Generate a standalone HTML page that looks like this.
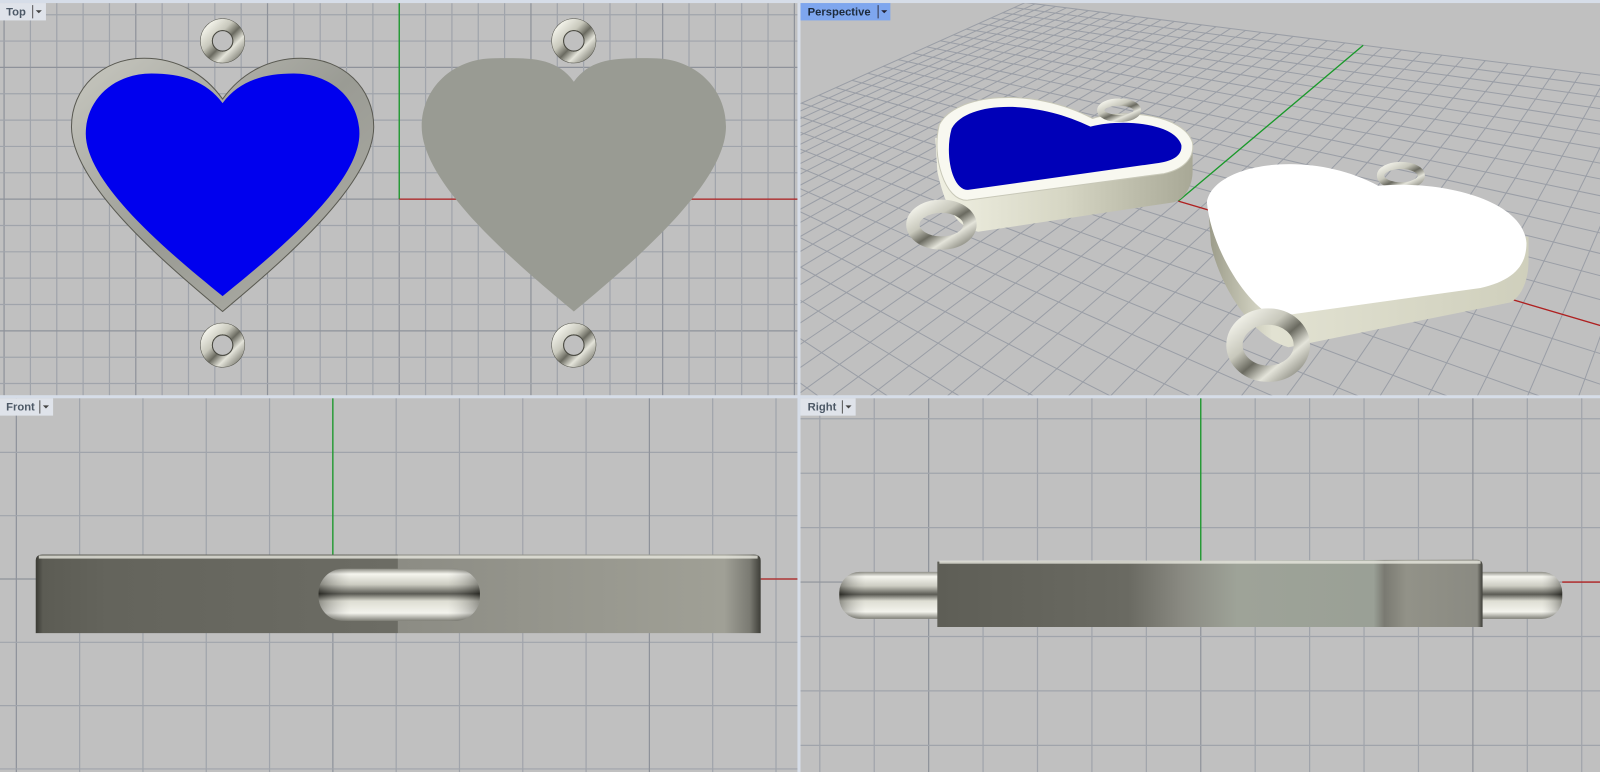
<!DOCTYPE html>
<html><head><meta charset="utf-8"><style>
html,body{margin:0;padding:0;background:#fff;overflow:hidden;width:1600px;height:772px}
svg{display:block;position:absolute;left:0;top:0}
text{font-family:"Liberation Sans",sans-serif;font-weight:bold;font-size:11px}
</style></head><body>
<svg id="s" width="1600" height="772" viewBox="0 0 1567 756" preserveAspectRatio="none" xmlns="http://www.w3.org/2000/svg">
<defs>
<clipPath id="c1"><rect x="0" y="3" width="781" height="384"/></clipPath>
<clipPath id="c2"><rect x="784" y="3" width="783" height="384"/></clipPath>
<clipPath id="c3"><rect x="0" y="390" width="781" height="366"/></clipPath>
<clipPath id="c4"><rect x="784" y="390" width="783" height="366"/></clipPath>
<linearGradient id="ring" x1="0" y1="0" x2="1" y2="1">
<stop offset="0" stop-color="#f6f6ee"/><stop offset=".35" stop-color="#c8c8bc"/><stop offset=".55" stop-color="#6a6a60"/><stop offset=".75" stop-color="#e4e4da"/><stop offset="1" stop-color="#8a8a80"/></linearGradient>
<linearGradient id="cap" x1="0" y1="0" x2="0" y2="1">
<stop offset="0" stop-color="#7a7a70"/><stop offset=".1" stop-color="#f4f4ec"/><stop offset=".3" stop-color="#c4c4b8"/><stop offset=".48" stop-color="#3e3e36"/><stop offset=".62" stop-color="#d8d8cc"/><stop offset=".85" stop-color="#f2f2ea"/><stop offset="1" stop-color="#6a6a60"/></linearGradient>
<linearGradient id="capH" x1="0" y1="0" x2="1" y2="0">
<stop offset="0" stop-color="#000" stop-opacity=".35"/><stop offset=".2" stop-color="#fff" stop-opacity=".15"/><stop offset=".8" stop-color="#fff" stop-opacity=".15"/><stop offset="1" stop-color="#000" stop-opacity=".35"/></linearGradient>
<linearGradient id="front" x1="0" y1="0" x2="1" y2="0">
<stop offset="0" stop-color="#3a3a34"/><stop offset=".01" stop-color="#5c5c54"/><stop offset=".1" stop-color="#64645c"/><stop offset=".499" stop-color="#6c6c64"/><stop offset=".5" stop-color="#8c8c84"/><stop offset=".95" stop-color="#a0a096"/><stop offset=".985" stop-color="#7a7a72"/><stop offset="1" stop-color="#3e3e38"/></linearGradient>
<linearGradient id="right" x1="0" y1="0" x2="1" y2="0">
<stop offset="0" stop-color="#5e5e56"/><stop offset=".35" stop-color="#6a6a62"/><stop offset=".45" stop-color="#8a8a82"/><stop offset=".55" stop-color="#9ea398"/><stop offset=".8" stop-color="#9aa096"/><stop offset=".82" stop-color="#7a7a72"/><stop offset=".86" stop-color="#929288"/><stop offset=".99" stop-color="#8a8a82"/><stop offset="1" stop-color="#3e3e38"/></linearGradient>
<linearGradient id="sideA" x1="0" y1="0" x2="1" y2="0">
<stop offset="0" stop-color="#f0f0e2"/><stop offset=".5" stop-color="#d6d6c4"/><stop offset="1" stop-color="#a8a896"/></linearGradient>
<linearGradient id="sideB" x1="0" y1="0" x2="1" y2="0">
<stop offset="0" stop-color="#9a9a88"/><stop offset=".2" stop-color="#e2e2d2"/><stop offset="1" stop-color="#cfcfbc"/></linearGradient>
<linearGradient id="rimT" x1="0" y1="0" x2="1" y2="1">
<stop offset="0" stop-color="#c8c8c0"/><stop offset=".5" stop-color="#9a9b94"/><stop offset="1" stop-color="#b0b0a8"/></linearGradient>
</defs>
<rect x="0" y="0" width="1567" height="756" fill="#d6dde8"/>
<rect x="0" y="3" width="781" height="384" fill="#c0c0c0"/>
<rect x="784" y="3" width="783" height="384" fill="#c0c0c0"/>
<rect x="0" y="390" width="781" height="366" fill="#c0c0c0"/>
<rect x="784" y="390" width="783" height="366" fill="#c0c0c0"/>
<g id="g1" clip-path="url(#c1)" stroke="#a0a4ab" stroke-width="1.2"></g>
<g id="g2" clip-path="url(#c2)" stroke="#9a9ea6" stroke-width="1"></g>
<g id="g3" clip-path="url(#c3)" stroke="#a0a4ab" stroke-width="1.2"></g>
<g id="g4" clip-path="url(#c4)" stroke="#a0a4ab" stroke-width="1.2"></g>

<g clip-path="url(#c1)">
<line x1="391" y1="3" x2="391" y2="195" stroke="#1a9a2a" stroke-width="1.3"/>
<line x1="391" y1="195" x2="781" y2="195" stroke="#b02020" stroke-width="1.3"/>
<path id="h1o" fill="url(#rimT)" stroke="#5a5a52" stroke-width="1"/>
<path id="h1i" fill="#0000ee"/>
<path id="h2" fill="#999b93"/>
<g id="rings1"></g>
</g>

<g clip-path="url(#c2)">
<path d="M916,135 L918,168 C925,200 935,222 958,227 L1150,198 C1162,194 1168,180 1168,168 L1168,140 Z" fill="url(#sideA)"/>
<path d="M920,122 C935,92 1010,84 1070,116 C1100,106 1160,112 1168,140 C1170,156 1158,166 1140,170 L948,196 C925,198 912,152 920,122 Z" fill="#f8f8f0" stroke="#c8c8b8"/>
<path d="M932,126 C946,100 1010,96 1068,124 C1098,116 1150,120 1157,142 C1158,153 1148,158 1132,160 L948,186 C932,186 925,150 932,126 Z" fill="#0000b8"/>
<ellipse cx="1096" cy="108" rx="18" ry="8" fill="none" stroke="url(#ring)" stroke-width="7"/>
<ellipse cx="922" cy="220" rx="28" ry="18" fill="none" stroke="url(#ring)" stroke-width="13"/>
<path d="M1183,198 L1186,240 C1195,280 1225,330 1262,340 L1480,296 C1492,288 1497,272 1497,255 L1497,232 Z" fill="url(#sideB)"/>
<ellipse cx="1372" cy="172" rx="20" ry="10" fill="none" stroke="url(#ring)" stroke-width="7"/>
<path d="M1182,198 C1188,160 1282,145 1350,182 C1410,176 1492,195 1495,238 C1495,262 1480,275 1450,282 L1250,310 C1225,305 1186,245 1182,198 Z" fill="#ffffff"/>
<ellipse cx="1242" cy="338" rx="33" ry="28" fill="none" stroke="url(#ring)" stroke-width="16"/>
</g>

<g clip-path="url(#c3)">
<line x1="326" y1="390" x2="326" y2="545" stroke="#1a9a2a" stroke-width="1.3"/>
<line x1="745" y1="567" x2="781" y2="567" stroke="#b02020" stroke-width="1.3"/>
<path d="M35,620 L35,549 Q35,543 42,543 L738,543 Q745,543 745,549 L745,620 Z" fill="url(#front)"/>
<rect x="38" y="544" width="704" height="3" fill="#e8e8e0" opacity=".8"/>
<rect x="312" y="557" width="158" height="51" rx="24" fill="url(#cap)"/>
<rect x="312" y="557" width="158" height="51" rx="24" fill="url(#capH)"/>
</g>

<g clip-path="url(#c4)">
<line x1="1176" y1="390" x2="1176" y2="549" stroke="#1a9a2a" stroke-width="1.3"/>
<line x1="1530" y1="570" x2="1567" y2="570" stroke="#b02020" stroke-width="1.3"/>
<rect x="822" y="560" width="130" height="46" rx="20" fill="url(#cap)"/>
<rect x="822" y="560" width="130" height="46" rx="20" fill="url(#capH)"/>
<rect x="1430" y="560" width="100" height="46" rx="20" fill="url(#cap)"/>
<rect x="1430" y="560" width="100" height="46" rx="20" fill="url(#capH)"/>
<path d="M918,614 L918,550 L1446,548 Q1452,548 1452,554 L1452,614 Z" fill="url(#right)"/>
<rect x="920" y="549" width="530" height="3" fill="#e8e8e0" opacity=".8"/>
</g>

<rect x="0" y="3" width="45" height="17" fill="#dfe3ea"/>
<text x="6" y="15" fill="#4c5866">Top</text>
<line x1="32" y1="5" x2="32" y2="18" stroke="#555" stroke-width="1"/>
<path d="M35,10 h6 l-3,3 z" fill="#444"/>
<rect x="784" y="3" width="88" height="17" fill="#7ea6ee"/>
<text x="791" y="15" fill="#1c2a3c">Perspective</text>
<line x1="860" y1="5" x2="860" y2="18" stroke="#334" stroke-width="1"/>
<path d="M863,10 h6 l-3,3 z" fill="#223"/>
<rect x="0" y="390" width="52" height="17" fill="#dfe3ea"/>
<text x="6" y="402" fill="#4c5866">Front</text>
<line x1="39" y1="392" x2="39" y2="405" stroke="#555" stroke-width="1"/>
<path d="M42,397 h6 l-3,3 z" fill="#444"/>
<rect x="784" y="390" width="54" height="17" fill="#dfe3ea"/>
<text x="791" y="402" fill="#4c5866">Right</text>
<line x1="825" y1="392" x2="825" y2="405" stroke="#555" stroke-width="1"/>
<path d="M828,397 h6 l-3,3 z" fill="#444"/>
</svg>
<script>
var NS="http://www.w3.org/2000/svg";
function L(g,x1,y1,x2,y2,st,w){var l=document.createElementNS(NS,"line");l.setAttribute("x1",x1);l.setAttribute("y1",y1);l.setAttribute("x2",x2);l.setAttribute("y2",y2);if(st)l.setAttribute("stroke",st);if(w)l.setAttribute("stroke-width",w);document.getElementById(g).appendChild(l);}
function grid(g,cx,cy,s,x0,x1,y0,y1){for(var k=-40;k<=40;k++){var x=cx+k*s;if(x>=x0&&x<=x1)L(g,x,y0,x,y1,k%5==0?"#8e929a":null);var y=cy+k*s;if(y>=y0&&y<=y1)L(g,x0,y,x1,y,k%5==0?"#8e929a":null);}}
grid("g1",391,195,25.8,0,781,3,387);
grid("g3",326,567,62,0,781,390,756);
grid("g4",1176,570,53.3,784,1567,390,756);
var VPx=[112,-110],VPy=[1818,-363],O=[1154,197],Nu=25,Nv=15,Kx=49,Ky=40;
function P(u,v){var w=1+u/Kx+v/Ky;return[(O[0]+u/Kx*VPx[0]+v/Ky*VPy[0])/w,(O[1]+u/Kx*VPx[1]+v/Ky*VPy[1])/w];}
function ok(w){return w>0.03;}
for(var j=-Nv;j<=Nv;j++){var um=Math.max(-Nu,Kx*(0.03-1-j/Ky));if(um<Nu){var a=P(um,j),b=P(Nu,j);L("g2",a[0],a[1],b[0],b[1]);}}
for(var i=-Nu;i<=Nu;i++){var vm=Math.max(-Nv,Ky*(0.03-1-i/Kx));if(vm<Nv){var a=P(i,vm),b=P(i,Nv);L("g2",a[0],a[1],b[0],b[1]);}}
var a=P(0,0),b=P(0,Nv);L("g2",a[0],a[1],b[0],b[1],"#1a9a2a",1.3);
var c=P(-Nu,0);L("g2",a[0],a[1],c[0],c[1],"#b02020",1.3);
function heart(cx,w,t,yb,yn){var h=yb-t;function p(dx,y){return (cx+dx)+","+y;}
return "M"+p(0,yn)+" C"+p(-0.06*w,yn-0.1*h)+" "+p(-0.15*w,t)+" "+p(-0.26*w,t)+" C"+p(-0.40*w,t)+" "+p(-0.5*w,t+0.12*h)+" "+p(-0.5*w,t+0.27*h)+" C"+p(-0.5*w,t+0.5*h)+" "+p(-0.18*w,yb-0.18*h)+" "+p(0,yb)+
" C"+p(0.18*w,yb-0.18*h)+" "+p(0.5*w,t+0.5*h)+" "+p(0.5*w,t+0.27*h)+" C"+p(0.5*w,t+0.12*h)+" "+p(0.40*w,t)+" "+p(0.26*w,t)+" C"+p(0.15*w,t)+" "+p(0.06*w,yn-0.1*h)+" "+p(0,yn)+"Z";}
document.getElementById("h1o").setAttribute("d",heart(218,296,57,305,97));
document.getElementById("h1i").setAttribute("d",heart(218,268,72,290,101));
document.getElementById("h2").setAttribute("d",heart(562,298,57,305,80));
var r=document.getElementById("rings1");
[[218,40],[218,338],[562,40],[562,338]].forEach(function(q){
r.insertAdjacentHTML("beforeend",'<circle cx="'+q[0]+'" cy="'+q[1]+'" r="22" fill="#55554c"/><circle cx="'+q[0]+'" cy="'+q[1]+'" r="16" fill="none" stroke="url(#ring)" stroke-width="11"/><circle cx="'+q[0]+'" cy="'+q[1]+'" r="10" fill="#c0c0c0" stroke="#4a4a42" stroke-width="1"/>');});
</script>
</body></html>
